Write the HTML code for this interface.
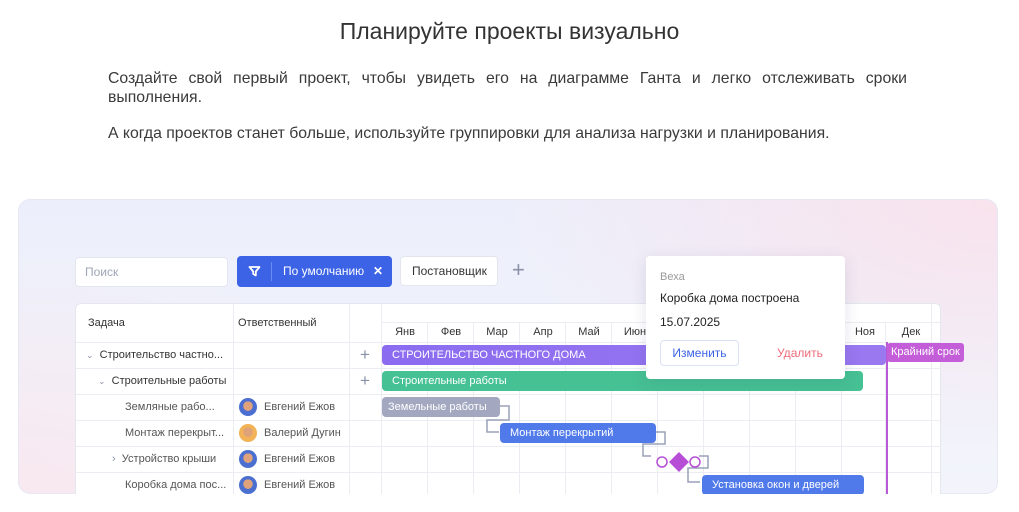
<!DOCTYPE html>
<html><head><meta charset="utf-8"><style>
*{box-sizing:border-box;margin:0;padding:0}
body{width:1019px;height:512px;background:#fff;font-family:"Liberation Sans",sans-serif;color:#333;position:relative;overflow:hidden}
.abs{position:absolute}
h1{position:absolute;top:18px;left:0;width:1019px;text-align:center;font-weight:400;font-size:23px;color:#333}
.p{position:absolute;left:108px;width:799px;font-size:15.8px;line-height:19px;color:#3a3a3a;text-align:justify}
.card{left:18px;top:199px;width:980px;height:295px;border-radius:12px;border:1px solid #e6e9f3;overflow:hidden;
background:radial-gradient(ellipse 500px 250px at 980px 0px,rgba(250,225,235,.9),transparent),radial-gradient(ellipse 400px 250px at 0px 300px,rgba(250,228,236,.8),transparent),linear-gradient(180deg,#eceffb,#f3f4fb)}
.inp{background:#fff;border:1px solid #e3e6ef;border-radius:4px;height:30px;font-size:12px;line-height:28px}
.t{font-size:11px;color:#333}
.bar{position:absolute;height:20px;border-radius:4px;color:#fff;font-size:11px;line-height:20px;padding-left:10px;white-space:nowrap}
.av{position:absolute;width:18px;height:18px;border-radius:50%;background:radial-gradient(circle at 50% 45%,#e0a27a 0 35%,#4a6fd0 36%)}
</style></head><body>
<h1>Планируйте проекты визуально</h1>
<div class="p" style="top:69px">Создайте свой первый проект, чтобы увидеть его на диаграмме Ганта и легко отслеживать сроки выполнения.</div>
<div class="p" style="top:124px;text-align:left">А когда проектов станет больше, используйте группировки для анализа нагрузки и планирования.</div>

<div class="abs card"></div>
<div class="abs inp" style="left:75px;top:257px;width:153px;color:#a0a5b5;padding-left:9px">Поиск</div>
<div class="abs" style="left:237px;top:256px;width:155px;height:31px;background:#3c63e6;border-radius:4px;color:#fff;font-size:12px;line-height:31px">
<svg class="abs" style="left:11px;top:9px" width="13" height="13" viewBox="0 0 13 13"><path d="M1.5 2h10L7.8 6.5v4L5.2 9V6.5z" fill="none" stroke="#fff" stroke-width="1.8" stroke-linejoin="round"/></svg>
<div class="abs" style="left:34px;top:6px;width:1px;height:19px;background:#6d8cef"></div>
<span class="abs" style="left:46px">По умолчанию</span><span class="abs" style="left:136px;font-weight:bold">✕</span></div>
<div class="abs inp" style="left:400px;top:256px;width:98px;padding-left:11px;color:#333">Постановщик</div>
<div class="abs" style="left:512px;top:258px;font-size:22px;color:#8a91a8;line-height:24px">+</div>

<div class="abs" style="left:75px;top:303px;width:866px;height:191px;background:#fff;border:1px solid #e4e7ef;border-bottom:none;border-radius:6px 6px 0 0;overflow:hidden">
<svg class="abs" style="left:0;top:0" width="866" height="195">
<g stroke="#ebedf3" stroke-width="1">
<line x1="157.5" y1="0" x2="157.5" y2="195"/><line x1="273.5" y1="0" x2="273.5" y2="195"/><line x1="305.5" y1="0" x2="305.5" y2="195"/>
<line x1="306" y1="18.5" x2="866" y2="18.5"/>
<line x1="0" y1="38.5" x2="866" y2="38.5"/><line x1="0" y1="64.5" x2="866" y2="64.5"/><line x1="0" y1="90.5" x2="866" y2="90.5"/><line x1="0" y1="116.5" x2="866" y2="116.5"/><line x1="0" y1="142.5" x2="866" y2="142.5"/><line x1="0" y1="168.5" x2="866" y2="168.5"/>
<line x1="351.5" y1="18" x2="351.5" y2="195"/><line x1="397.5" y1="18" x2="397.5" y2="195"/><line x1="443.5" y1="18" x2="443.5" y2="195"/><line x1="489.5" y1="18" x2="489.5" y2="195"/><line x1="535.5" y1="18" x2="535.5" y2="195"/><line x1="581.5" y1="18" x2="581.5" y2="195"/><line x1="627.5" y1="18" x2="627.5" y2="195"/><line x1="673.5" y1="18" x2="673.5" y2="195"/><line x1="719.5" y1="18" x2="719.5" y2="195"/><line x1="765.5" y1="18" x2="765.5" y2="195"/><line x1="809.5" y1="18" x2="809.5" y2="195"/><line x1="855.5" y1="0" x2="855.5" y2="195"/>
</g></svg>
<div class="abs t" style="left:12px;top:13px">Задача</div>
<div class="abs t" style="left:162px;top:13px">Ответственный</div>
<div class="abs t" style="top:22px;left:306px;width:560px;display:flex">
<span style="width:46px;text-align:center">Янв</span><span style="width:46px;text-align:center">Фев</span><span style="width:46px;text-align:center">Мар</span><span style="width:46px;text-align:center">Апр</span><span style="width:46px;text-align:center">Май</span><span style="width:46px;text-align:center">Июн</span><span style="width:46px"></span><span style="width:46px"></span><span style="width:46px"></span><span style="width:46px"></span><span style="width:46px;text-align:center">Ноя</span><span style="width:46px;text-align:center">Дек</span></div>
<div class="abs t" style="left:10px;top:45px"><span style="color:#8a91a8;font-size:9px">⌄</span>&nbsp; Строительство частно...</div>
<div class="abs t" style="left:22px;top:71px"><span style="color:#8a91a8;font-size:9px">⌄</span>&nbsp; Строительные работы</div>
<div class="abs t" style="left:49px;top:97px;color:#555">Земляные рабо...</div>
<div class="abs t" style="left:49px;top:123px;color:#555">Монтаж перекрыт...</div>
<div class="abs t" style="left:36px;top:149px;color:#555"><span style="color:#8a91a8">›</span>&nbsp; Устройство крыши</div>
<div class="abs t" style="left:49px;top:175px;color:#555">Коробка дома пос...</div>
<div class="abs" style="left:284px;top:41px;color:#8a91a8;font-size:17px">+</div>
<div class="abs" style="left:284px;top:67px;color:#8a91a8;font-size:17px">+</div>
<div class="av" style="left:163px;top:94px"></div><div class="abs t" style="left:188px;top:97px;color:#555">Евгений Ежов</div>
<div class="av" style="left:163px;top:120px;background:radial-gradient(circle at 50% 45%,#e0a27a 0 35%,#f2b256 36%)"></div><div class="abs t" style="left:188px;top:123px;color:#555">Валерий Дугин</div>
<div class="av" style="left:163px;top:146px"></div><div class="abs t" style="left:188px;top:149px;color:#555">Евгений Ежов</div>
<div class="av" style="left:163px;top:172px"></div><div class="abs t" style="left:188px;top:175px;color:#555">Евгений Ежов</div>

<div class="bar" style="left:306px;top:41px;width:504px;background:linear-gradient(90deg,#8b6cf0,#9a78f0)">СТРОИТЕЛЬСТВО ЧАСТНОГО ДОМА</div>
<div class="bar" style="left:306px;top:67px;width:481px;background:#46c193">Строительные работы</div>
<div class="bar" style="left:306px;top:93px;width:118px;background:#a3a8c0;padding-left:6px">Земельные работы</div>
<div class="bar" style="left:424px;top:119px;width:156px;background:#5079ea">Монтаж перекрытий</div>
<div class="bar" style="left:626px;top:171px;width:162px;background:#5079ea">Установка окон и дверей</div>
<svg class="abs" style="left:300px;top:90px" width="360" height="105"><g fill="none" stroke="#9aa1b8" stroke-width="1.5">
<path d="M124 12h9v14h-22v12h12"/><path d="M280 38h9v12h-22v12h8"/><path d="M323 62h9v12h-20v14h12"/></g>
<circle cx="286" cy="68" r="5" fill="#fff" stroke="#b64fd6" stroke-width="1.5"/><circle cx="319" cy="68" r="5" fill="#fff" stroke="#b64fd6" stroke-width="1.5"/>
<path d="M303 58l10 10-10 10-10-10z" fill="#b64fd6"/></svg>
<div class="abs" style="left:810px;top:38px;width:2px;height:157px;background:#b85ad6"></div>
</div>
<div class="abs" style="left:887px;top:343px;width:77px;height:19px;background:#c45ed8;border-radius:3px;color:#fff;font-size:11px;line-height:19px;padding-left:4px">Крайний срок</div>

<div class="abs" style="left:646px;top:256px;width:199px;height:123px;background:#fff;border-radius:4px;box-shadow:0 4px 16px rgba(60,70,110,.14)">
<div class="abs" style="left:14px;top:15px;font-size:11px;color:#999">Веха</div>
<div class="abs" style="left:14px;top:35px;font-size:12px;color:#222">Коробка дома построена</div>
<div class="abs" style="left:14px;top:59px;font-size:12px;color:#222">15.07.2025</div>
<div class="abs" style="left:14px;top:84px;width:79px;height:26px;border:1px solid #dbe2f5;border-radius:4px;color:#3c63e6;font-size:12px;line-height:24px;text-align:center">Изменить</div>
<div class="abs" style="left:131px;top:90px;color:#f06a7a;font-size:12px">Удалить</div>
</div>
</body></html>
